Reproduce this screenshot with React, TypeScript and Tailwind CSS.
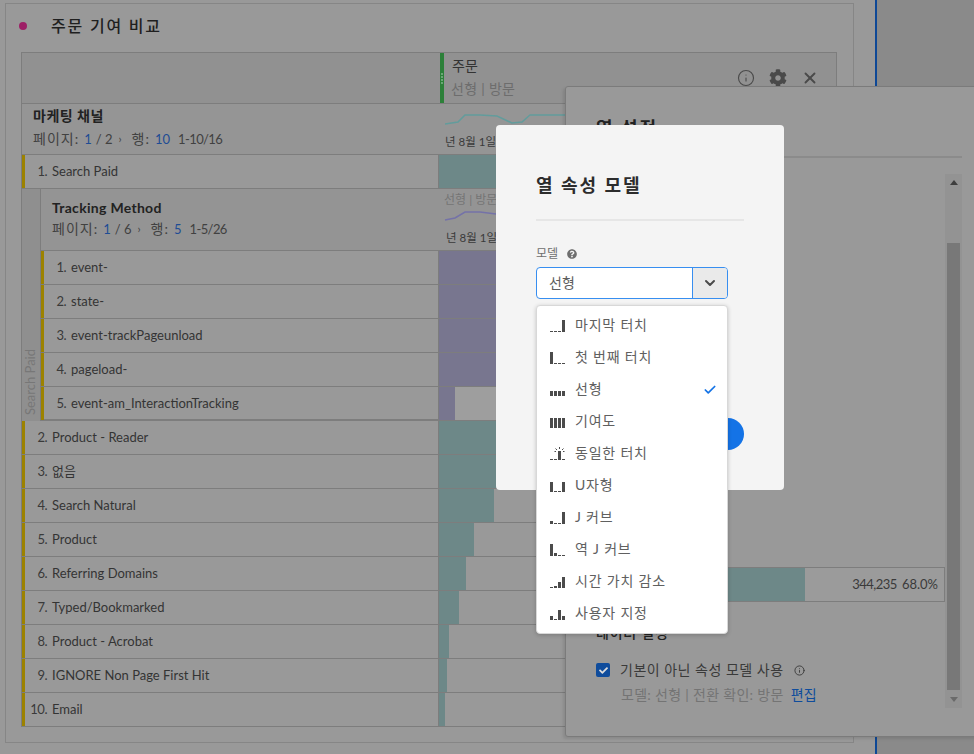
import { Check, ChevronDown, Info, X } from 'lucide-react';
import { FaCheck, FaCog, FaQuestionCircle } from 'react-icons/fa';

interface Row {
  label: string;
  bar: number;
}

const topRows: Row[] = [
  { label: 'Product - Reader', bar: 130 },
  { label: '없음', bar: 130 },
  { label: 'Search Natural', bar: 55 },
  { label: 'Product', bar: 35 },
  { label: 'Referring Domains', bar: 27 },
  { label: 'Typed/Bookmarked', bar: 20 },
  { label: 'Product - Acrobat', bar: 10 },
  { label: 'IGNORE Non Page First Hit', bar: 8 },
  { label: 'Email', bar: 6 },
];

const nestedRows: Row[] = [
  { label: 'event-', bar: 130 },
  { label: 'state-', bar: 130 },
  { label: 'event-trackPageunload', bar: 130 },
  { label: 'pageload-', bar: 130 },
  { label: 'event-am_InteractionTracking', bar: 16 },
];

const models = [
  { label: '마지막 터치', bars: [1, 1, 1, 12] },
  { label: '첫 번째 터치', bars: [12, 1, 1, 1] },
  { label: '선형', bars: [5, 5, 5, 5], selected: true },
  { label: '기여도', bars: [10, 10, 10, 10] },
  { label: '동일한 터치', bars: [1, 1, 9, 1], spark: true },
  { label: 'U자형', bars: [10, 1, 1, 10] },
  { label: 'J 커브', bars: [3, 1, 1, 12] },
  { label: '역 J 커브', bars: [12, 3, 1, 1] },
  { label: '시간 가치 감소', bars: [1, 2, 6, 11] },
  { label: '사용자 지정', bars: [4, 1, 10, 4] },
];

function ModelIcon({ bars, spark }: { bars: number[]; spark?: boolean }) {
  return (
    <svg width="16" height="14" viewBox="0 0 16 14" className="mt-[3px] shrink-0 text-[#4b4b4b]">
      {bars.map((h, i) => (
        <rect key={i} x={i * 4} y={13 - h} width="3" height={h} fill="currentColor" />
      ))}
      {spark && (
        <path d="M9.5 0v2M5.5 1.5l1.5 1.5M13.5 1.5L12 3M4.5 4.5h1.5M13 4.5h1.5" stroke="currentColor" fill="none" />
      )}
    </svg>
  );
}

function BarRow({ n, row, color, nested, last }: { n: number; row: Row; color: string; nested?: boolean; last?: boolean }) {
  return (
    <div className={`flex h-[34px] border-b border-[#7d7d7d] ${last ? 'shadow-[inset_0_-1px_0_#7d7d7d]' : ''}`}>
      <div className={`flex shrink-0 items-center border-r border-[#7d7d7d] ${nested ? 'w-[398px]' : 'w-[417px]'}`}>
        <div className="h-full w-[3px] shrink-0 bg-[#9c8200]" />
        <span className="w-[22px] shrink-0 text-right tracking-[-0.5px] text-[#3a3a3a]">{n}.</span>
        <span className="ml-[5px] text-[#343434]">{row.label}</span>
      </div>
      <div className={`flex-1 ${nested ? 'bg-[#9e9e9e]' : 'bg-[#999999]'}`}>
        <div className="h-full" style={{ width: row.bar, backgroundColor: color }} />
      </div>
    </div>
  );
}

function PageInfo({ page, pages, rows, range, top }: { page: number; pages: number; rows: number; range: string; top: string }) {
  return (
    <div className={`${top} flex items-center text-[13px] leading-5 text-[#414141]`}>
      <span className="text-[14px] tracking-[1px]">페이지:</span>
      <span className="ml-[5px] text-[#1e4c94]">{page}</span>
      <span className="ml-1">/ {pages}</span>
      <span className="ml-[6px] text-[11px]">›</span>
      <span className="ml-[10px] text-[14px] tracking-[1px]">행:</span>
      <span className="ml-[5px] text-[#1e4c94]">{rows}</span>
      <span className="ml-[8px] tracking-[-0.6px]">{range}</span>
    </div>
  );
}

export default function App() {
  return (
    <div className="relative flex h-[754px] w-[974px] overflow-hidden bg-[#999999] font-['Lato','Noto_Sans_CJK_KR',sans-serif] text-[13px]">
      {/* Report panel */}
      <div className="mt-[3px] ml-[5px] h-[740px] w-[849px] shrink-0 border border-[#868686] px-[15px]">
        <div className="flex h-[48px] items-center pb-[5px]">
          <span className="ml-[-2px] h-2 w-2 rounded-full bg-[#9d1f66]" />
          <span className="ml-6 text-[16px] font-medium tracking-[1.8px] text-[#1f1f1f]">주문 기여 비교</span>
        </div>

        <div className="w-[816px] border-x border-t border-[#7d7d7d]">
          {/* Column header */}
          <div className="flex h-[51px] border-b border-[#7d7d7d] bg-[#919191]">
            <div className="w-[418px] shrink-0" />
            <div className="flex w-[4px] flex-col items-center justify-center gap-[1px] bg-[#2c8039]">
              <i className="h-[2px] w-[2px] rounded-full bg-[#7fb58a]" />
              <i className="h-[2px] w-[2px] rounded-full bg-[#7fb58a]" />
              <i className="h-[2px] w-[2px] rounded-full bg-[#7fb58a]" />
              <i className="h-[2px] w-[2px] rounded-full bg-[#7fb58a]" />
            </div>
            <div className="ml-[7px] flex flex-col pt-[3px]">
              <span className="pl-[1px] text-[14px] leading-5 text-[#333333]">주문</span>
              <span className="mt-[3px] text-[14px] leading-5 tracking-[0.3px] text-[#6d6d6d]">선형 | 방문</span>
            </div>
            <div className="ml-auto flex items-start gap-[14px] pt-[16px] pr-[17px] text-[#4a4a4a]">
              <Info size={18} strokeWidth={1.5} />
              <FaCog size={18} />
              <X size={18} strokeWidth={2.5} />
            </div>
          </div>

          {/* Dimension header */}
          <div className="flex h-[51px] border-b border-[#7d7d7d] bg-[#959595]">
            <div className="w-[417px] shrink-0 pt-[2px] pl-[11px]">
              <div className="text-[14px] leading-5 font-bold tracking-[0.5px] text-[#222222]">마케팅 채널</div>
              <PageInfo page={1} pages={2} rows={10} range="1-10/16" top="mt-[3px]" />
            </div>
            <div className="pl-[6px]">
              <svg width="130" height="26" viewBox="0 0 130 26" className="block">
                <path d="M0 20 13 18 20 11H35L52 12 67 19 77 18 85 11H120" fill="none" stroke="#629c9c" strokeWidth="1.5" />
              </svg>
              <div className="mt-[2px] text-[11.5px] leading-5 text-[#3a3a3a]">년 8월 1일</div>
            </div>
          </div>

          <BarRow n={1} row={{ label: 'Search Paid', bar: 130 }} color="#6d8888" />

          {/* Breakdown */}
          <div className="flex">
            <div className="flex w-[19px] shrink-0 items-start justify-start border-r border-[#7d7d7d] bg-[#8f8f8f] pt-[160px]">
              <span className="rotate-180 text-[13px] leading-4 text-[#777777] [writing-mode:vertical-rl]">Search Paid</span>
            </div>
            <div className="flex-1">
              <div className="flex h-[62px] border-b border-[#7d7d7d] bg-[#949494]">
                <div className="w-[398px] shrink-0 pt-[9px] pl-[11px]">
                  <div className="text-[14px] leading-5 font-bold tracking-[0.3px] text-[#222222]">Tracking Method</div>
                  <PageInfo page={1} pages={6} rows={5} range="1-5/26" top="mt-[1px]" />
                </div>
                <div className="pt-[3px] pl-[5px]">
                  <div className="text-[12px] leading-4 text-[#747474]">선형 | 방문</div>
                  <svg width="60" height="16" viewBox="0 0 60 16" className="mt-[1px] block">
                    <path d="M1 11 11 9 21 3H36L52 5" fill="none" stroke="#7472a8" strokeWidth="1.5" />
                  </svg>
                  <div className="mt-[3px] pl-[2px] text-[11.5px] leading-5 text-[#3a3a3a]">년 8월 1일</div>
                </div>
              </div>
              {nestedRows.map((row, i) => (
                <BarRow key={row.label} n={i + 1} row={row} color="#78768f" nested last={i === nestedRows.length - 1} />
              ))}
            </div>
          </div>

          {topRows.map((row, i) => (
            <BarRow key={row.label} n={i + 2} row={row} color="#6d8888" />
          ))}
        </div>
      </div>

      {/* Blue divider and right rail */}
      <div className="ml-[21px] w-[2px] shrink-0 bg-[#0e4896]" />
      <div className="flex-1 bg-[#8a8a8a]" />

      {/* Column settings panel, dimmed */}
      <div className="absolute top-[86px] left-[565px] h-[651px] w-[420px] rounded-[3px] border border-[#7b7b7b] bg-[#999999] shadow-[-2px_2px_3px_rgba(0,0,0,0.1)]">
        <div className="h-[71px] w-[396px] border-b-2 border-[#8b8b8b] pt-[28px] pl-[30px] text-[18px] font-bold tracking-[2px] text-[#222222]">
          열 설정
        </div>

        <div className="absolute top-[87px] left-[379px] flex h-[534px] w-[17px] flex-col items-center bg-[#939393]">
          <span className="mt-[6px] border-x-[4px] border-b-[5px] border-x-transparent border-b-[#3e3e3e]" />
          <div className="mt-[58px] h-[447px] w-[13px] bg-[#787878]" />
          <span className="mt-[7px] border-x-[4px] border-t-[5px] border-x-transparent border-t-[#6a6a6a]" />
        </div>

        <div className="absolute top-[480px] left-0 flex h-[35px] w-[379px] items-center border border-[#7d7d7d] bg-[#9b9b9b]">
          <div className="h-full w-[238px] bg-[#6d8888]" />
          <span className="ml-auto text-[13px] tracking-[-0.5px] text-[#3a3a3a]">344,235</span>
          <span className="ml-[5px] pr-[6px] text-[13px] text-[#3a3a3a]">68.0%</span>
        </div>

        <div className="absolute top-[536px] left-[30px] text-[14px] leading-5 font-medium tracking-[0.8px] text-[#222222]">데이터 설정</div>

        <div className="absolute top-[573px] left-[30px] flex items-center">
          <span className="flex h-[14px] w-[14px] items-center justify-center rounded-[2px] bg-[#0f4c9c] text-[#dddddd]">
            <FaCheck size={9} />
          </span>
          <span className="ml-[10px] text-[14px] leading-5 tracking-[0.5px] text-[#3a3a3a]">기본이 아닌 속성 모델 사용</span>
          <Info size={11} strokeWidth={2} className="ml-[10px] text-[#3a3a3a]" />
        </div>
        <div className="absolute top-[598px] left-[55px] flex text-[14px] leading-5 tracking-[0.3px] text-[#747474]">
          <span>모델: 선형 | 전환 확인: 방문</span>
          <span className="ml-[7px] text-[#0f4c9c]">편집</span>
        </div>
      </div>

      {/* Attribution model dialog */}
      <div className="absolute top-[125px] left-[496px] h-[365px] w-[288px] rounded-[4px] bg-[#f4f4f4] px-10 pt-[48px]">
        <div className="h-[48px] border-b-2 border-[#e6e6e6] text-[18px] leading-6 font-bold tracking-[2px] text-[#2c2c2c]">
          열 속성 모델
        </div>
        <div className="mt-[25px] flex items-center text-[12px] leading-4 text-[#6e6e6e]">
          <span>모델</span>
          <FaQuestionCircle size={10} className="ml-[9px]" />
        </div>
        <div className="mt-[5px] flex h-8 w-[192px] overflow-hidden rounded-[4px] border border-[#378ef0] bg-white">
          <span className="flex-1 pl-3 text-[14px] leading-[30px] text-[#5e5e5e]">선형</span>
          <span className="flex w-[35px] items-center justify-center border-l border-[#378ef0] bg-[#eaeaea] text-[#4b4b4b]">
            <ChevronDown size={16} strokeWidth={3} />
          </span>
        </div>
        <div className="absolute top-[293px] left-[226px] h-8 w-[22px] rounded-r-full bg-[#1473e6]" />
        {/* Open select list */}
        <div className="absolute top-[180px] left-[40px] z-10 w-[192px] rounded-[4px] border border-[#d8d8d8] bg-white pt-[2px] pb-[5px] shadow-[0_1px_4px_rgba(0,0,0,0.2)]">
          {models.map((m) => (
            <div key={m.label} className="flex h-8 items-center pl-[13px] text-[14px] text-[#606060]">
              <ModelIcon bars={m.bars} spark={m.spark} />
              <span className="ml-[9px] tracking-[0.8px]">{m.label}</span>
              {m.selected && <Check size={14} strokeWidth={3} className="mt-[3px] mr-[10px] ml-auto text-[#1473e6]" />}
            </div>
          ))}
        </div>
      </div>
    </div>
  );
}
